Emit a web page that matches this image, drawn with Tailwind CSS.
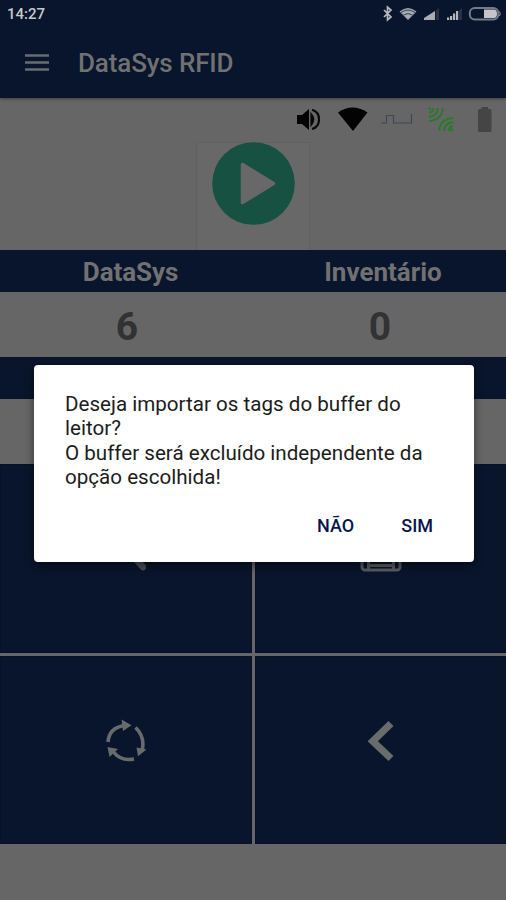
<!DOCTYPE html>
<html lang="pt-BR">
<head>
<meta charset="utf-8">
<title>DataSys RFID</title>
<script src="https://cdn.jsdelivr.net/npm/@tailwindcss/browser@4"></script>
</head>
<body class="bg-[#666666] font-[Roboto,'Liberation_Sans',sans-serif]">
<div class="relative flex h-[900px] w-[506px] flex-col overflow-hidden bg-[#666666]">
  <header class="z-10 h-[98px] shrink-0 bg-[#08152c] text-[#717171] shadow-[0_1px_3px_rgba(0,0,0,0.4)]">
    <div class="flex h-7 items-center justify-between pl-[7px] pr-[5px]">
      <span class="text-[15px] font-medium leading-7 text-[#c6c9ce]">14:27</span>
      <svg class="h-7 w-[124px]" viewBox="377 0 124 28" fill="none">
        <path d="M384 10l7 7-3.500 3V7l3.500 3-7 7" stroke="#b4b9c0" stroke-width="1.700"/>
        <path d="M399.500 11.500q8.500-7 17 0L408 20z" fill="#a4a9b1"/>
        <path d="M401 12.500q7-5 14 0M403.500 15q4.500-3 9 0" stroke="#1c273b" stroke-width=".8"/>
        <path d="M439 8v12h-3V10.500z M462 8v12h-3V10.500z" fill="#273142"/>
        <path d="M424 20v-2l11-7v9z" fill="#a9adb3"/>
        <path d="M447 20v-2.500h2.200V20z M450 20v-4h2.200v4z M453 20v-6.500h2.200V20z M456 20v-9h2.200v9z" fill="#b3b6bc"/>
        <rect x="469.800" y="8" width="28.500" height="11.500" rx="5" stroke="#747b86" stroke-width="2"/>
        <path d="M484 9.500h10q3 0 3 4.300t-3 4.300h-10z" fill="#c3c5c8"/>
        <path d="M499.500 11.500q1.500 2.200 0 4.500" stroke="#9298a2"/>
      </svg>
    </div>
    <div class="flex h-[70px] items-center pl-[25px]">
      <svg class="h-[18px] w-6" viewBox="0 0 24 18" fill="none" stroke="#686c70" stroke-width="2.600"><path d="M0 1.500h24M0 8.500h24M0 15.500h24"/></svg>
      <h1 class="ml-[29px] text-[26px] font-medium leading-[34px] tracking-[-0.130px]">DataSys RFID</h1>
    </div>
  </header>

  <div class="flex h-11 shrink-0 justify-end">
    <svg class="h-11 w-[226px]" viewBox="280 98 226 44" fill="none">
      <path d="M297 115h5l7-6v21l-7-6h-5z" fill="#030303"/>
      <path d="M311.500 115q3.500 4.500 0 9zM312 109.800q7 2 7 9.600t-7 9.600" stroke="#080808" stroke-width="2.200"/>
      <path d="M338 112.500q14.500-10 29.500 0L353 131z" fill="#030303"/>
      <path d="M381 123h5.500v-7.500h7v7.500h18v-9" stroke="#3b4656" stroke-width="1.100"/>
      <g stroke="#267b2a" stroke-width="1.900">
        <path d="M429 112.500q4 0 4.500-4.500M429 116.800q8.500-.5 9-8.800M429 121q13-1 13.800-13"/>
        <path d="M453 126.500q-4 0-4.500 4.500M453 122.200q-8.500.5-9 8.800M453 118q-13 1-13.800 13"/>
      </g>
      <circle cx="429.800" cy="108.800" r="1.400" fill="#267b2a"/><circle cx="451.500" cy="129.800" r="1.600" fill="#267b2a"/>
      <path d="M479.500 109h2v-2h6.500v2h2q1.500 0 1.500 1.500v20q0 1.500-1.500 1.500h-10.500q-1.500 0-1.500-1.500v-20q0-1.500 1.500-1.500z" fill="#454545"/>
    </svg>
  </div>

  <div class="flex h-[108px] shrink-0 justify-center">
    <button class="flex w-[114px] items-start justify-center border border-b-0 border-[#606060] bg-[#686868]">
      <svg class="h-[83px] w-[83px] -translate-y-px" viewBox="0 0 83 83"><circle cx="41.500" cy="41.500" r="41.300" fill="#165142"/><path d="M30.500 22.500L61.500 41.500 30.500 60.500z" fill="#686868" stroke="#686868" stroke-width="3.500" stroke-linejoin="round"/></svg>
    </button>
  </div>

  <div class="grid h-[42px] shrink-0 grid-cols-2 bg-[#08152c] text-center text-[26px] font-bold leading-[45px] text-[#717171]">
    <span class="pl-2 tracking-[-0.100px]">DataSys</span><span class="pl-[7px]">Inventário</span>
  </div>
  <div class="grid h-[65px] shrink-0 grid-cols-2 text-center text-[39px] font-bold leading-[70px] text-[#323232]">
    <span class="pl-px">6</span><span class="pl-px">0</span>
  </div>
  <div class="h-[42px] shrink-0 bg-[#08152c]"></div>
  <div class="h-[65px] shrink-0"></div>

  <div class="grid h-[380px] shrink-0 grid-cols-[252px_251px] grid-rows-[189px_188px] gap-[3px]">
    <div class="flex items-center justify-center bg-[#08152c] shadow-[inset_0_0_1px_#01061c]">
      <svg class="h-10 w-10 translate-y-[-5px]" viewBox="0 0 40 40" fill="none" stroke="#4c5057" stroke-width="6.500" stroke-linecap="round"><circle cx="16" cy="8" r="13"/><path d="M25 20L37 33"/></svg>
    </div>
    <div class="flex items-center justify-center bg-[#08152c] shadow-[inset_0_0_1px_#01061c]">
      <svg class="h-11 w-11 translate-y-[-9px]" viewBox="0 0 44 44" fill="none" stroke="#5a5d62" stroke-width="3"><rect x="3" y="4" width="38" height="38" rx="3"/><path d="M9.500 42V24h25v18M11 37.500h23M12 4v12h20V4"/></svg>
    </div>
    <div class="flex items-center justify-center bg-[#08152c] shadow-[inset_0_0_1px_#01061c]">
      <svg class="h-[44px] w-[44px] translate-y-[-9px]" viewBox="104 719 44 44" fill="none" stroke="#686b6b" stroke-width="3.600">
        <path d="M108 742Q109 728 124 725.500M135.500 727.500Q145.500 737 142 751M134 759Q121 761.500 113.500 752"/>
        <path d="M121.500 719.500l10 5.800-8.500 5.700zM136.500 747.500l10 2-8.500 6.800zM107.500 747l10.500 2-8.500 8z" fill="#686b6b" stroke="none"/>
      </svg>
    </div>
    <div class="flex items-center justify-center bg-[#08152c] shadow-[inset_0_0_1px_#01061c]">
      <svg class="h-[44px] w-[30px] translate-y-[-9px]" viewBox="0 0 30 44" fill="none" stroke="#696c6d" stroke-width="7.200"><path d="M25 4.500L6.800 22.300 25 39.500"/></svg>
    </div>
  </div>

  <div role="dialog" class="absolute left-[34px] top-[365px] z-20 flex h-[197px] w-[440px] flex-col rounded-[4px] bg-white pl-[31px] pt-[27px] shadow-[0_4px_10px_rgba(0,0,0,0.5)]">
    <p class="whitespace-nowrap text-[20.600px] leading-[24.300px] text-[#1c1c1c]">Deseja importar os tags do buffer do<br>leitor?<br>O buffer será excluído independente da<br>opção escolhida!</p>
    <div class="mt-[25px] flex justify-end gap-[47px] pr-[41px] text-[18px] font-medium leading-6 text-[#07154f]">
      <button>NÃO</button><button>SIM</button>
    </div>
  </div>
</div>
</body>
</html>
